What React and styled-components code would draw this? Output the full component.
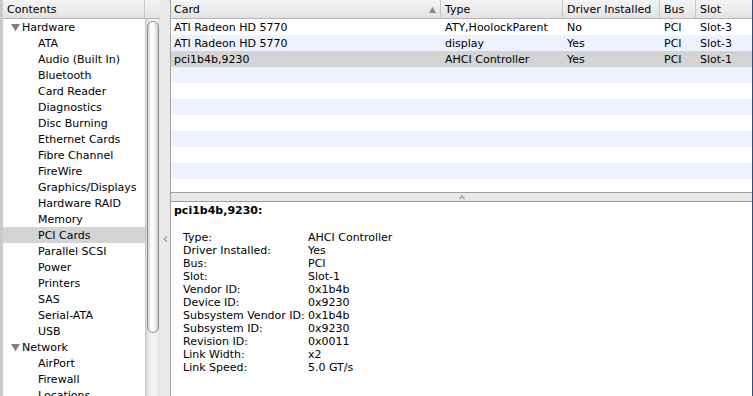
import React from "react"
import styled, {createGlobalStyle} from "styled-components"

const GlobalStyle = createGlobalStyle`
  html, body {
    margin: 0;
    padding: 0;
    background: #fff;
  }
  body {
    font-family: "DejaVu Sans", "Liberation Sans", sans-serif;
    font-size: 11px;
    color: #000;
  }
`

const tree = [
  {name: "Hardware", children: ["ATA", "Audio (Built In)", "Bluetooth", "Card Reader", "Diagnostics", "Disc Burning", "Ethernet Cards", "Fibre Channel", "FireWire", "Graphics/Displays", "Hardware RAID", "Memory", "PCI Cards", "Parallel SCSI", "Power", "Printers", "SAS", "Serial-ATA", "USB"]},
  {name: "Network", children: ["AirPort", "Firewall", "Locations"]}
]

const cards = [
  ["ATI Radeon HD 5770", "ATY,HoolockParent", "No", "PCI", "Slot-3"],
  ["ATI Radeon HD 5770", "display", "Yes", "PCI", "Slot-3"],
  ["pci1b4b,9230", "AHCI Controller", "Yes", "PCI", "Slot-1"]
]

const details = [
  ["Type:", "AHCI Controller"],
  ["Driver Installed:", "Yes"],
  ["Bus:", "PCI"],
  ["Slot:", "Slot-1"],
  ["Vendor ID:", "0x1b4b"],
  ["Device ID:", "0x9230"],
  ["Subsystem Vendor ID:", "0x1b4b"],
  ["Subsystem ID:", "0x9230"],
  ["Revision ID:", "0x0011"],
  ["Link Width:", "x2"],
  ["Link Speed:", "5.0 GT/s"]
]

export default function App () {
  const selectedItem = "PCI Cards"
  const selectedRow = 2
  const emptyRows = 8

  return (
    <>
      <GlobalStyle />
      <Window>
        <Sidebar>
          <HeaderBar>
            <HeaderCell width = {142} pad = {4}>Contents</HeaderCell>
            <HeaderCorner />
          </HeaderBar>
          <SidebarBody>
            <TreeList>
              {tree.map((group) => (
                <React.Fragment key = {group.name}>
                  <GroupRow>
                    <Disclosure viewBox = "0 0 9 8"><path d = "M0 0 H9 L4.5 7.5 Z" /></Disclosure>
                    {group.name}
                  </GroupRow>
                  {group.children.map((item) => (
                    <ItemRow key = {item} selected = {item === selectedItem}>{item}</ItemRow>
                  ))}
                </React.Fragment>
              ))}
            </TreeList>
            <ScrollTrack>
              <ScrollThumb />
            </ScrollTrack>
          </SidebarBody>
        </Sidebar>

        <VSplit>
          <svg width = "5" height = "6" viewBox = "0 0 5 6"><path d = "M4 0.5 L1 3 L4 5.5" fill = "none" stroke = "#9a9a9a" strokeWidth = "1.2" /></svg>
        </VSplit>

        <Main>
          <Table>
            <TableHead>
              <ColHead>
                <span>Card</span>
                <svg width = "7" height = "6" viewBox = "0 0 7 6"><path d = "M3.5 0 L7 6 H0 Z" fill = "#8a8a8a" /></svg>
              </ColHead>
              <ColHead>Type</ColHead>
              <ColHead>Driver Installed</ColHead>
              <ColHead>Bus</ColHead>
              <ColHead>Slot</ColHead>
            </TableHead>
            {cards.map((card, i) => (
              <TableRow key = {i} striped = {i % 2 === 1} selected = {i === selectedRow}>
                {card.map((cell, j) => <Cell key = {j}>{cell}</Cell>)}
              </TableRow>
            ))}
            {Array.from({length: emptyRows}).map((_, i) => (
              <TableRow key = {"e" + i} striped = {(i + cards.length) % 2 === 1} />
            ))}
          </Table>

          <HSplit>
            <svg width = "6" height = "5" viewBox = "0 0 6 5"><path d = "M0.5 4 L3 1 L5.5 4" fill = "none" stroke = "#9a9a9a" strokeWidth = "1.2" /></svg>
          </HSplit>

          <Detail>
            <DetailTitle>pci1b4b,9230:</DetailTitle>
            <DetailGrid>
              {details.map(([label, value]) => (
                <React.Fragment key = {label}>
                  <span>{label}</span>
                  <span>{value}</span>
                </React.Fragment>
              ))}
            </DetailGrid>
          </Detail>
        </Main>
      </Window>
    </>
  )
}


const Window = styled.div`
  display: flex;
  width: 753px;
  height: 396px;
  overflow: hidden;
  background: #fff;
`

const Sidebar = styled.div`
  width: 157px;
  border-left: 3px solid #cacaca;
  display: flex;
  flex-direction: column;
  flex-shrink: 0;
`

const HeaderBar = styled.div`
  height: 18px;
  display: flex;
  flex-shrink: 0;
  background: linear-gradient(#f5f5f5, #e2e2e2);
  border-bottom: 1px solid #b5b5b5;
`

const HeaderCell = styled.div`
  width: ${props => props.width}px;
  padding-left: ${props => props.pad}px;
  box-sizing: border-box;
  line-height: 19px;
  border-right: 1px solid #c6c6c6;
`

const HeaderCorner = styled.div`
  flex: 1;
`

const SidebarBody = styled.div`
  flex: 1;
  display: flex;
  overflow: hidden;
`

const TreeList = styled.div`
  width: 142px;
  flex-shrink: 0;
`

const GroupRow = styled.div`
  height: 16px;
  box-sizing: border-box;
  padding: 1px 0 0 8px;
  line-height: 15px;
  display: flex;
  align-items: center;
  gap: 2px;
  white-space: nowrap;
`

const Disclosure = styled.svg`
  width: 9px;
  height: 8px;
  fill: #808080;
`

const ItemRow = styled.div`
  height: 16px;
  box-sizing: border-box;
  padding: 1px 0 0 35px;
  line-height: 16px;
  white-space: nowrap;
  background: ${props => props.selected ? "#d4d4d4" : "transparent"};
`

const ScrollTrack = styled.div`
  flex: 1;
  border-left: 1px solid #c4c4c4;
  background: linear-gradient(to right, #d9d9d9, #f2f2f2 35%, #f4f4f4 65%, #e0e0e0);
  padding-top: 2px;
`

const ScrollThumb = styled.div`
  width: 10px;
  height: 310px;
  margin-left: 1px;
  border: 1px solid #8f8f8f;
  border-radius: 6px;
  background: linear-gradient(to right, #d2d2d2, #ffffff 35%, #fafafa 60%, #cdcdcd);
`

const VSplit = styled.div`
  width: 10px;
  flex-shrink: 0;
  background: #e9e9e9;
  display: flex;
  justify-content: center;
  align-items: flex-start;
  padding-top: 236px;
  box-sizing: border-box;
`

const Main = styled.div`
  flex: 1;
  display: flex;
  flex-direction: column;
  border-left: 1px solid #a3a3a3;
  border-right: 1px solid #2d4c7c;
  min-width: 0;
`

const Table = styled.div`
  height: 192px;
  flex-shrink: 0;
  overflow: hidden;
`

const columns = "270px 122px 97px 36px 1fr"

const TableHead = styled.div`
  display: grid;
  grid-template-columns: ${columns};
  height: 18px;
  background: linear-gradient(#f5f5f5, #e2e2e2);
  border-bottom: 1px solid #b5b5b5;
`

const ColHead = styled.div`
  display: flex;
  align-items: center;
  justify-content: space-between;
  padding: 1px 4px 0 4px;
  border-right: 1px solid #c6c6c6;
  line-height: 17px;
  white-space: nowrap;

  &:first-child {
    padding-left: 3px;
  }

  &:last-child {
    border-right: none;
  }
`

const TableRow = styled.div`
  display: grid;
  grid-template-columns: ${columns};
  height: 16px;
  box-sizing: border-box;
  padding-top: 1px;
  line-height: 16px;
  background: ${props => props.selected ? "#d4d4d4" : props.striped ? "#edf3fe" : "#fff"};
`

const Cell = styled.div`
  padding-left: 4px;
  white-space: nowrap;
  overflow: hidden;

  &:first-child {
    padding-left: 3px;
  }
`

const HSplit = styled.div`
  height: 8px;
  flex-shrink: 0;
  background: #e9e9e9;
  border-top: 1px solid #a0a0a0;
  border-bottom: 1px solid #9c9c9c;
  display: flex;
  align-items: center;
  justify-content: center;
`

const Detail = styled.div`
  flex: 1;
  padding: 2px 3px 0 3px;
`

const DetailTitle = styled.div`
  font-weight: bold;
  line-height: 14px;
`

const DetailGrid = styled.div`
  display: grid;
  grid-template-columns: 125px 1fr;
  margin-top: 13px;
  padding-left: 9px;
  line-height: 13px;
`
